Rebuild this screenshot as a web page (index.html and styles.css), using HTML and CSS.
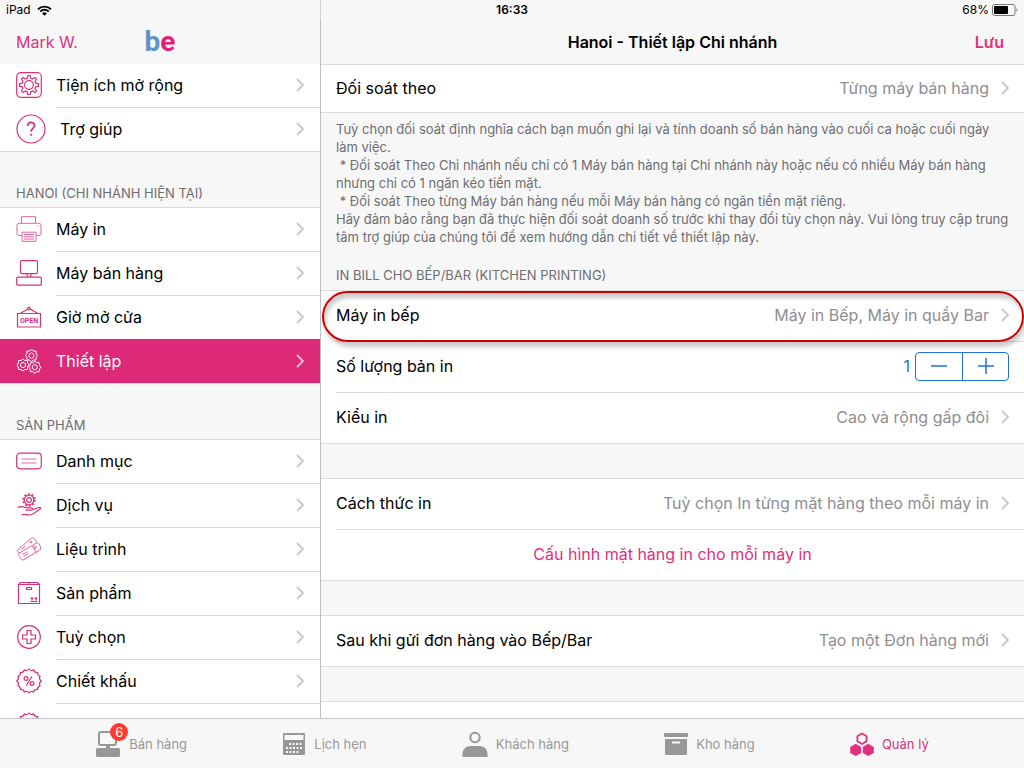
FILE: index.html
```html
<!DOCTYPE html>
<html lang="vi">
<head>
	<meta charset="utf-8" />
	<meta name="viewport" content="width=device-width, initial-scale=1" />
	<title>Hanoi - Thiết lập Chi nhánh</title>
	<link rel="stylesheet" href="styles.css">
</head>
<body>
	<svg class="defs" width="0" height="0">
		<symbol id="chevron" viewBox="0 0 8 14">
			<path d="M1 1l6 6-6 6" fill="none" stroke="currentColor" stroke-width="1.8"/>
		</symbol>
	</svg>

	<div class="statusbar">
		<div class="carrier">
			iPad
			<svg width="15" height="11" viewBox="0 0 15 11">
				<path d="M1 4.2a9.4 9.4 0 0 1 13 0M3.3 6.5a6.1 6.1 0 0 1 8.4 0" fill="none" stroke="#000" stroke-width="1.9"/>
				<path d="M7.5 10.8L5.1 8.4a3.5 3.5 0 0 1 4.8 0z"/>
			</svg>
		</div>
		<time class="clock">16:33</time>
		<div class="battery">
			68%
			<svg width="26" height="12" viewBox="0 0 26 12">
				<rect x=".5" y=".5" width="22.5" height="11" rx="2" fill="none" stroke="#777"/>
				<rect x="2" y="2" width="14" height="8" rx="1"/>
				<path d="M24.5 4v4c1.3-.6 1.3-3.4 0-4z" fill="#777"/>
			</svg>
		</div>
	</div>

	<div class="split">
		<aside class="sidebar">
			<header class="navbar">
				<a class="user" href="#">Mark W.</a>
				<div class="logo"><span>b</span>e</div>
			</header>
			<nav class="scroll">
				<ul class="menu">
					<li><a href="#">
						<svg class="icon" viewBox="0 0 26 26"><rect x=".7" y=".7" width="24.6" height="24.6" rx="4"/><circle cx="13" cy="13" r="4.4"/><path d="M11.8 3.5h2.4l.6 2.8 1.7.7 2.4-1.6 1.7 1.7L19 9.5l.7 1.7 2.8.6v2.4l-2.8.6-.7 1.7 1.6 2.4-1.7 1.7-2.4-1.6-1.7.7-.6 2.8h-2.4l-.6-2.8-1.7-.7-2.4 1.6-1.7-1.7L7 16.5l-.7-1.7-2.8-.6v-2.4l2.8-.6L7 9.5 5.4 7.1l1.7-1.7L9.5 7l1.7-.7z"/></svg>
						<span>Tiện ích mở rộng</span><svg class="chevron"><use href="#chevron"/></svg>
					</a></li>
					<li><a href="#">
						<svg class="icon icon-big" viewBox="0 0 30 30"><circle cx="15" cy="15" r="14"/><path d="M11.7 12c0-5 6.9-4.7 6.9-.6 0 2.8-3.4 2.9-3.4 6.3M15.2 19.7v2" stroke-width="1.7"/></svg>
						<span>Trợ giúp</span><svg class="chevron"><use href="#chevron"/></svg>
					</a></li>
				</ul>

				<h2 class="heading">Hanoi (chi nhánh hiện tại)</h2>
				<ul class="menu">
					<li><a href="#">
						<svg class="icon soft" viewBox="0 0 26 26"><path d="M5.5 7V.7h14V7M6 19.5H3.2A2.2 2.2 0 0 1 1 17.3V9.500A2.200 2.200 0 0 1 3.200 7.300h19.600A2.200 2.200 0 0 1 25 9.500v7.800a2.200 2.200 0 0 1-2.200 2.200H20M6 16.200h14v9.100H6zM8 18.500h10M8 20.800h10M8 23.100h10M21.500 10h1"/></svg>
						<span>Máy in</span><svg class="chevron"><use href="#chevron"/></svg>
					</a></li>
					<li><a href="#">
						<svg class="icon" viewBox="0 0 26 26"><rect x="4.5" y=".7" width="17" height="13" rx="1.5"/><rect x=".7" y="17.2" width="24.6" height="8" rx="1"/><path d="M11 14c0 2 1 3 1 3M15 14c0 2-1 3-1 3"/></svg>
						<span>Máy bán hàng</span><svg class="chevron"><use href="#chevron"/></svg>
					</a></li>
					<li><a href="#">
						<svg class="icon" viewBox="0 0 26 26"><path d="M1.500 9.500h23V23h-23zM4 9.500L12 5M22 9.500L14 5"/><circle cx="13" cy="4.500" r="1.300"/><text class="sign" x="13" y="19" text-anchor="middle">OPEN</text></svg>
						<span>Giờ mở cửa</span><svg class="chevron"><use href="#chevron"/></svg>
					</a></li>
					<li class="active"><a href="#" aria-current="page">
						<svg class="icon" viewBox="0 0 26 26">
							<g id="nut"><path d="M15.500 1.500l2 1.500h2.400l.3 2.700 1.300 1.800-1.300 1.800-.3 2.700h-2.400l-2 1.500-2-1.500h-2.400l-.3-2.700-1.300-1.800 1.300-1.800.3-2.700h2.400z"/><path d="M15.500 4.800l2.400 1.400v2.700l-2.400 1.400-2.400-1.400V6.200z"/></g>
							<use href="#nut" x="-8.5" y="9.5"/>
							<use href="#nut" x="3.3" y="11.7"/>
						</svg>
						<span>Thiết lập</span><svg class="chevron"><use href="#chevron"/></svg>
					</a></li>
				</ul>

				<h2 class="heading">Sản phẩm</h2>
				<ul class="menu">
					<li><a href="#">
						<svg class="icon" viewBox="0 0 26 26"><rect x=".7" y="5.2" width="24.6" height="15.6" rx="3.5"/><path d="M5.500 11h15M5.500 15h15" opacity=".7"/></svg>
						<span>Danh mục</span><svg class="chevron"><use href="#chevron"/></svg>
					</a></li>
					<li><a href="#">
						<svg class="icon" viewBox="0 0 26 26"><circle cx="13" cy="8" r="2.3"/><circle cx="13" cy="8" r="4.8"/><circle cx="13" cy="8" r="6" stroke-dasharray="1.9 1.87" stroke-width="1.6"/><path d="M1.500 15.500c4-1.800 6-.8 8.500.3h5c2.200 0 2 2.400 0 2.400h-5M15 18.200l7.500-2.700c2-.5 2.800.8 1.300 1.800l-7 4.700c-5 3-7-1.500-11.300 1"/></svg>
						<span>Dịch vụ</span><svg class="chevron"><use href="#chevron"/></svg>
					</a></li>
					<li><a href="#">
						<svg class="icon soft" viewBox="0 0 26 26"><path d="M2 13.500L15.500 2.200c1-.8 2.200-.6 3 .4l2.300 3.600M2 13.500c-1 1-.8 2 .2 2.800l1.600.4M3.500 17L20 7.200c1.200-.8 2.500-.4 3.200.8l1.300 3c.6 1.500.2 2.500-1 3.200L8 23.600c-1.200.7-2.400.4-3-.8l-2-3.300c-.6-1-.3-2 .5-2.500z"/><path d="M6.500 18.500l5-2.800M7.500 20.500l5-2.800M5 13.500l4.500-3.200M16 9.500l4.500 7"/><circle cx="19" cy="11.500" r="1.2"/><circle cx="15" cy="6" r=".9"/></svg>
						<span>Liệu trình</span><svg class="chevron"><use href="#chevron"/></svg>
					</a></li>
					<li><a href="#">
						<svg class="icon" viewBox="0 0 26 26"><path d="M2.500 4.500h21v19h-21zM2.500 4.500l2-2h17l2 2M13 2.500v2M10.500 7.500h5v2h-5zM16 18v2.500M20 18v2.500M14.500 21.500h7M15 19l1-1.500 1 1.500M19 19l1-1.500 1 1.500"/></svg>
						<span>Sản phẩm</span><svg class="chevron"><use href="#chevron"/></svg>
					</a></li>
					<li><a href="#">
						<svg class="icon" viewBox="0 0 26 26"><circle cx="13" cy="13" r="11.3"/><path d="M11 6.500h4V11h4.500v4H15v4.500h-4V15H6.500v-4H11z"/></svg>
						<span>Tuỳ chọn</span><svg class="chevron"><use href="#chevron"/></svg>
					</a></li>
					<li><a href="#">
						<svg class="icon" viewBox="0 0 26 26"><path id="seal" d="M13 1q2 2.500 4.600 1 1 2.800 3.900 2.500 0 3 2.500 3.900-1.500 2.600 1.300 4.600-2.800 2-1.300 4.600-2.500.9-2.500 3.900-2.900-.3-3.900 2.500-2.600-1.500-4.600 1-2-2.500-4.600-1-1-2.800-3.900-2.500 0-3-2.500-3.900 1.500-2.600-1.300-4.600 2.800-2 1.300-4.600 2.500-.9 2.500-3.900 2.900.3 3.900-2.500 2.600 1.500 4.600-1z"/><circle cx="10" cy="10.500" r="1.9"/><circle cx="16" cy="15.500" r="1.9"/><path d="M15.800 8.500l-5.500 9"/></svg>
						<span>Chiết khấu</span><svg class="chevron"><use href="#chevron"/></svg>
					</a></li>
					<li><a href="#">
						<svg class="icon" viewBox="0 0 26 26"><use href="#seal"/></svg>
						<span>Tích lũy</span><svg class="chevron"><use href="#chevron"/></svg>
					</a></li>
				</ul>
			</nav>
		</aside>

		<main class="detail">
			<header class="navbar">
				<h1>Hanoi - Thiết lập Chi nhánh</h1>
				<button class="save" type="button">Lưu</button>
			</header>
			<div class="scroll">
				<section class="group first">
					<button class="row" type="button"><span>Đối soát theo</span><span class="value">Từng máy bán hàng</span><svg class="chevron"><use href="#chevron"/></svg></button>
				</section>
				<div class="note">
					<p>Tuỳ chọn đối soát định nghĩa cách bạn muốn ghi lại và tính doanh số bán hàng vào cuối ca hoặc cuối ngày làm việc.</p>
					<p>&nbsp;* Đối soát Theo Chi nhánh nếu chỉ có 1 Máy bán hàng tại Chi nhánh này hoặc nếu có nhiều Máy bán hàng nhưng chỉ có 1 ngăn kéo tiền mặt.</p>
					<p>&nbsp;* Đối soát Theo từng Máy bán hàng nếu mỗi Máy bán hàng có ngăn tiền mặt riêng.</p>
					<p>Hãy đảm bảo rằng bạn đã thực hiện đối soát doanh số trước khi thay đổi tùy chọn này. Vui lòng truy cập trung tâm trợ giúp của chúng tôi để xem hướng dẫn chi tiết về thiết lập này.</p>
				</div>

				<h2 class="heading">In bill cho bếp/bar (kitchen printing)</h2>
				<section class="group">
					<button class="row marked" type="button"><span>Máy in bếp</span><span class="value">Máy in Bếp, Máy in quầy Bar</span><svg class="chevron"><use href="#chevron"/></svg></button>
					<div class="row">
						<span id="copies">Số lượng bản in</span>
						<output class="count" aria-labelledby="copies">1</output>
						<div class="stepper">
							<button type="button" aria-label="Giảm"><svg width="16" height="16" viewBox="0 0 16 16"><path d="M0 8h16"/></svg></button>
							<button type="button" aria-label="Tăng"><svg width="16" height="16" viewBox="0 0 16 16"><path d="M0 8h16M8 0v16"/></svg></button>
						</div>
					</div>
					<button class="row" type="button"><span>Kiểu in</span><span class="value">Cao và rộng gấp đôi</span><svg class="chevron"><use href="#chevron"/></svg></button>
				</section>

				<section class="group">
					<button class="row" type="button"><span>Cách thức in</span><span class="value">Tuỳ chọn In từng mặt hàng theo mỗi máy in</span><svg class="chevron"><use href="#chevron"/></svg></button>
					<button class="row action" type="button">Cấu hình mặt hàng in cho mỗi máy in</button>
				</section>

				<section class="group">
					<button class="row" type="button"><span>Sau khi gửi đơn hàng vào Bếp/Bar</span><span class="value">Tạo một Đơn hàng mới</span><svg class="chevron"><use href="#chevron"/></svg></button>
				</section>

				<section class="group">
					<div class="row"></div>
				</section>
			</div>
		</main>
	</div>

	<nav class="tabbar">
		<a href="#">
			<span class="tab-icon">
				<svg width="26" height="26" viewBox="0 0 26 26"><rect x="4" y="1" width="17" height="13" rx="2" fill="none" stroke="currentColor" stroke-width="2"/><path d="M11 14h4v3h8.500a1.500 1.500 0 0 1 1.500 1.500v6a1.500 1.500 0 0 1-1.500 1.500h-21A1.500 1.500 0 0 1 1 24.500v-6A1.500 1.500 0 0 1 2.500 17H11z"/></svg>
				<span class="badge">6</span>
			</span>
			Bán hàng
		</a>
		<a href="#">
			<svg width="24" height="24" viewBox="0 0 24 24"><path fill-rule="evenodd" d="M2 1h20a1 1 0 0 1 1 1v20a1 1 0 0 1-1 1H2a1 1 0 0 1-1-1V2a1 1 0 0 1 1-1zm.500 2v5h19V3z"/><path d="M7 12h13M4 16h16M4 20h13" stroke="#f7f7f7" stroke-width="2" stroke-dasharray="2 1.5"/></svg>
			Lịch hẹn
		</a>
		<a href="#">
			<svg width="26" height="26" viewBox="0 0 26 26"><circle cx="13" cy="6.500" r="4.7" fill="none" stroke="currentColor" stroke-width="2"/><path d="M.5 26v-3c0-4.500 3.500-8 8-8h9c4.500 0 8 3.500 8 8v3z"/></svg>
			Khách hàng
		</a>
		<a href="#">
			<svg width="24" height="24" viewBox="0 0 24 24"><rect y="1" width="24" height="4" rx="1"/><path fill-rule="evenodd" d="M1 7h22v14.500a1.500 1.500 0 0 1-1.500 1.500h-19A1.500 1.500 0 0 1 1 21.500zm7 2.500v2h8v-2z"/></svg>
			Kho hàng
		</a>
		<a class="current" href="#" aria-current="page">
			<svg width="24" height="24" viewBox="0 0 24 24"><path d="M12 1.500l4.600 2.700v5L12 12 7.400 9.200v-5z" fill="none" stroke="currentColor" stroke-width="1.8"/><path d="M5.700 11.800l5.500 3.100v6L5.700 24 .2 20.900v-6zM18.300 11.800l5.500 3.100v6L18.300 24l-5.500-3.100v-6z"/></svg>
			Quản lý
		</a>
	</nav>
</body>
</html>
```
FILE: styles.css
```css
* {
	box-sizing: border-box;
}

body {
	margin: 0;
	height: 100vh;
	display: flex;
	flex-direction: column;
	overflow: hidden;
	background: #f7f7f7;
	color: #000;
	font-family: Inter, Roboto, sans-serif;
	font-size: 16px;
	line-height: 20px;
}

a {
	color: inherit;
	text-decoration: none;
}

button {
	border: 0;
	padding: 0;
	background: none;
	color: inherit;
	font: inherit;
}

ul {
	list-style: none;
	margin: 0;
	padding: 0;
}

svg {
	flex: none;
	fill: currentColor;
}

.defs {
	position: absolute;
}

/* status bar */
.statusbar {
	display: grid;
	grid-template-columns: 1fr auto 1fr;
	align-items: center;
	height: 20px;
	padding: 0 6px;
	background: linear-gradient(#d4d4d8, #d4d4d8) 320px 0 / 1px 100% no-repeat;
	font-size: 12px;
}

.carrier, .battery {
	display: flex;
	align-items: center;
	gap: 6px;
}

.battery {
	justify-content: flex-end;
	gap: 3px;
}

.clock {
	font-weight: 600;
}

.split {
	flex: 1;
	display: flex;
	min-height: 0;
}

.sidebar, .detail {
	display: flex;
	flex-direction: column;
}

.sidebar {
	flex: none;
	width: 321px;
	border-right: 1px solid #bfbfc3;
}

.detail {
	flex: 1;
	min-width: 0;
}

.scroll {
	flex: 1;
	min-height: 0;
	overflow: hidden;
}

.navbar {
	flex: none;
	display: grid;
	grid-template-columns: 1fr auto 1fr;
	align-items: center;
	height: 44px;
	padding: 0 16px;
}

.detail .navbar {
	padding: 0 20px;
}

.user {
	color: #e0307e;
}

.logo {
	color: #e3207a;
	font: 700 28px/36px Roboto, sans-serif;
}

	.logo span {
		color: #5b93cb;
	}

.navbar h1 {
	grid-column: 2;
	margin: 0;
	font-size: 16px;
	font-weight: 600;
}

.save {
	justify-self: end;
	color: #e0307e;
	font-weight: 600;
}

.heading {
	margin: 0;
	color: #6d6d72;
	font-size: 13px;
	font-weight: 400;
	text-transform: uppercase;
}

.chevron {
	width: 8px;
	height: 14px;
	color: #c7c7cc;
}

/* left menu */
.sidebar .heading {
	padding: 31px 16px 4px;
}

.menu {
	background: #fff;
	border-bottom: 1px solid #dcdcde;
}

.heading + .menu {
	border-top: 1px solid #dcdcde;
}

.menu a {
	display: flex;
	align-items: center;
	height: 44px;
	padding: 0 16px 2px;
	background: linear-gradient(#dcdcde, #dcdcde) 56px 100% / 100% 1px no-repeat;
}

.menu li:last-child a {
	height: 43px;
	background: none;
}

.menu a span {
	flex: 1;
	padding-left: 14px;
}

.icon {
	width: 26px;
	height: 26px;
	fill: none;
	stroke: #d93078;
	stroke-width: 1.2;
}

.icon-big {
	width: 30px;
	height: 30px;
}

.soft {
	stroke: #e0649b;
	stroke-width: 1;
}

.sign {
	fill: #d93078;
	stroke: none;
	font: 700 7px Roboto, sans-serif;
}

/* covers the separator of the row above */
.menu .active {
	margin-top: -1px;
	background: #dc2a78;
	color: #fff;
}

	.menu li.active a {
		height: 44px;
		padding-bottom: 0;
	}

.active .icon {
	stroke: #fff;
	stroke-width: 1;
}

.active .chevron {
	color: #f3c0d6;
}

/* settings */
.group {
	margin-bottom: 34px;
	background: #fff;
	border-top: 1px solid #dcdcde;
}

.first {
	margin: 0;
}

.row {
	position: relative;
	display: flex;
	align-items: center;
	width: 100%;
	height: 51px;
	padding: 0 15px 3px;
	background: linear-gradient(#dcdcde, #dcdcde) 15px 100% / 100% 1px no-repeat;
	text-align: left;
}

.first .row {
	height: 48px;
}

.row:last-child {
	background-position: 0 100%;
}

.value {
	flex: 1;
	padding-right: 12px;
	color: #8e8e93;
	text-align: right;
}

.action {
	justify-content: center;
	color: #e0307e;
}

.marked::after {
	content: "";
	position: absolute;
	inset: 0 0 0 1px;
	border: 2px solid #c00;
	border-radius: 26px;
	box-shadow: 2px 5px 4px rgba(0, 0, 0, .2), inset 2px 5px 4px rgba(0, 0, 0, .2);
}

.note {
	padding: 7px 12px 19px 15px;
	color: #6d6d72;
	font-size: 13px;
	line-height: 18px;
}

	.note p {
		margin: 0;
	}

.detail .heading {
	padding: 0 15px 5px;
}

.count {
	flex: 1;
	padding-right: 5px;
	color: #1a73d8;
	text-align: right;
}

.stepper {
	display: flex;
	border: 1px solid #1a73d8;
	border-radius: 4px;
}

	.stepper button {
		display: flex;
		align-items: center;
		justify-content: center;
		width: 46px;
		height: 27px;
	}

	.stepper button + button {
		border-left: 1px solid #1a73d8;
	}

	.stepper path {
		stroke: #1a73d8;
		stroke-width: 1.5;
	}

/* bottom tabs */
.tabbar {
	flex: none;
	display: flex;
	align-items: center;
	justify-content: space-evenly;
	height: 50px;
	border-top: 1px solid #c4c4c6;
	color: #979797;
	font-size: 13px;
}

	.tabbar a {
		display: flex;
		align-items: center;
		gap: 8px;
	}

	.tabbar .current {
		color: #e0307e;
	}

.tab-icon {
	position: relative;
	display: flex;
}

.badge {
	position: absolute;
	top: -8px;
	right: -7px;
	min-width: 18px;
	border-radius: 9px;
	background: #ff3b30;
	color: #fff;
	line-height: 18px;
	text-align: center;
}
```
